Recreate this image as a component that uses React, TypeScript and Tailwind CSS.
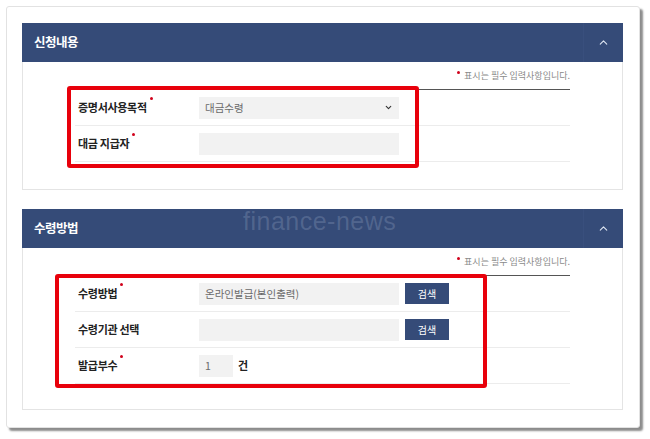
import React from "react";
import { ChevronDown, ChevronUp } from "lucide-react";

const font = { fontFamily: '"Noto Sans CJK KR", "Noto Sans", sans-serif' };

function Req() {
  return <span className="inline-block w-[3px] h-[3px] rounded-full bg-[#d0021b] ml-[3px] relative -top-[9px]" />;
}

function Header({ title }: { title: string }) {
  return (
    <div className="h-[39px] bg-[#354b78] flex items-center">
      <div className="flex-1 pl-[12px] text-white text-[12.5px] font-bold tracking-[-0.5px]">{title}</div>
      <div className="w-[40px] h-full flex items-center justify-center border-l border-[#394f7d]">
        <ChevronUp size={13} strokeWidth={2} className="text-[#dfe6f2]" />
      </div>
    </div>
  );
}

function Note() {
  return (
    <div className="flex justify-end h-[12px] items-center text-[9px] text-[#8a8a8a] leading-none">
      <span className="inline-block w-[3px] h-[3px] rounded-full bg-[#d0021b] mr-[4px] relative -top-[3px]" />
      표시는 필수 입력사항입니다.
    </div>
  );
}

function Row({ label, req, children }: { label: string; req?: boolean; children: React.ReactNode }) {
  return (
    <div className="h-[36px] flex items-center border-b border-[#ececec]">
      <div className="w-[124px] pl-[3px] text-[11px] font-bold text-[#222] tracking-[-0.3px] flex items-center">
        {label}
        {req && <Req />}
      </div>
      <div className="flex items-center">{children}</div>
    </div>
  );
}

function Box({ w, text, select }: { w: number; text?: string; select?: boolean }) {
  return (
    <div
      className={`h-[22px] bg-[#f2f2f2] flex items-center px-[6px] text-[10.5px] text-[#6a6a6a] ${w === 200 ? "w-[200px]" : "w-[34px]"}`}
    >
      <span className="flex-1">{text}</span>
      {select && <ChevronDown size={9} strokeWidth={3} className="text-[#333]" />}
    </div>
  );
}

function Btn() {
  return (
    <div className="ml-[6px] w-[44px] h-[21px] bg-[#354b78] text-white text-[10px] flex items-center justify-center">
      검색
    </div>
  );
}

export default function App() {
  return (
    <div className="w-[650px] h-[439px] bg-white overflow-hidden relative" style={font}>
      <div className="ml-[6px] mt-[6px] w-[634px] h-[422px] border border-[#e2e2e2] rounded-[3px] bg-white shadow-[3px_3px_2px_rgba(0,0,0,0.45)] pl-[15px] pt-[16px]">
        <div className="w-[601px]">
          {/* Section 1 */}
          <Header title="신청내용" />
          <div className="h-[128px] border border-t-0 border-[#e4e4e4] px-[52px] pt-[7px]">
            <Note />
            <div className="relative mt-[8px] border-t border-[#555]">
              <Row label="증명서사용목적" req>
                <Box w={200} text="대금수령" select />
              </Row>
              <Row label="대금 지급자" req>
                <Box w={200} />
              </Row>
              <div className="absolute left-[-8px] top-[-4px] w-[352px] h-[82px] border-[4px] border-[#e8000b] rounded-[3px]" />
            </div>
          </div>

          {/* Section 2 */}
          <div className="mt-[19px]">
            <Header title="수령방법" />
            <div className="h-[162px] border border-t-0 border-[#e4e4e4] px-[52px] pt-[7px]">
              <Note />
              <div className="relative mt-[8px] border-t border-[#555]">
                <Row label="수령방법" req>
                  <Box w={200} text="온라인발급(본인출력)" />
                  <Btn />
                </Row>
                <Row label="수령기관 선택">
                  <Box w={200} />
                  <Btn />
                </Row>
                <Row label="발급부수" req>
                  <Box w={34} text="1" />
                  <span className="ml-[5px] text-[11px] font-bold text-[#222]">건</span>
                </Row>
                <div className="absolute left-[-20px] top-[-2px] w-[432px] h-[114px] border-[4px] border-[#e8000b] rounded-[3px]" />
              </div>
            </div>
          </div>
        </div>
      </div>
      <div className="absolute left-[243px] top-[203px] text-[25px] text-[rgba(185,198,222,0.22)] pointer-events-none tracking-[0.5px]" style={{ fontFamily: '"Liberation Sans", sans-serif' }}>
        finance-news
      </div>
    </div>
  );
}
